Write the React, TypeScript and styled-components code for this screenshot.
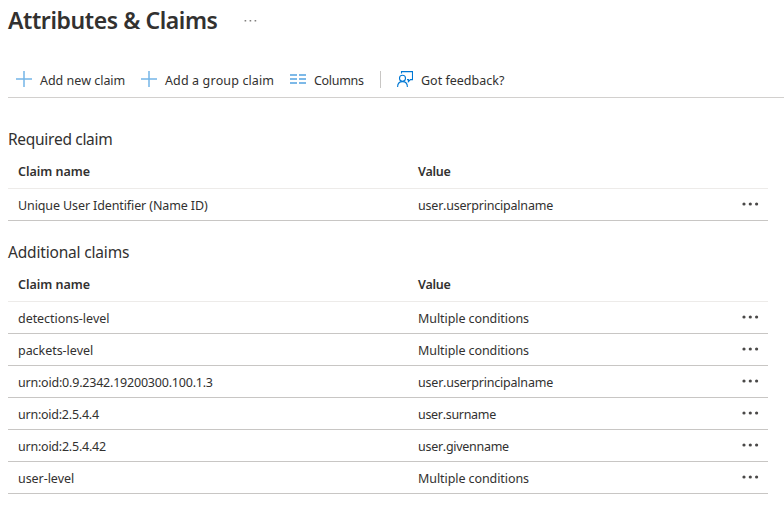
import React from "react";
import styled, { createGlobalStyle } from "styled-components";

const GlobalStyle = createGlobalStyle`
  *, *::before, *::after { box-sizing: border-box; }
  body {
    margin: 0;
    background: #fff;
    color: #323130;
    font: 12.5px/18px "Noto Sans", "Open Sans", sans-serif;
    font-kerning: none;
  }
`;

const Page = styled.main`
  height: 519px;
  padding-left: 8px;
  overflow: hidden;
`;

const TitleBar = styled.header`
  display: flex;
  align-items: center;
  height: 62px;
  padding-bottom: 21px;
`;

const Title = styled.h1`
  margin: 0;
  width: 236px;
  height: 32px;
  font-size: 23px;
  line-height: 31px;
  font-weight: 600;
  letter-spacing: -0.42px;
  white-space: nowrap;
`;

const Toolbar = styled.nav`
  display: flex;
  align-items: center;
  height: 36px;
  padding-left: 8px;
  border-bottom: 1px solid #d2d0ce;
`;

const Label = styled.span<{ $spacing?: number }>`
  display: block;
  padding-top: 2px;
  letter-spacing: ${(p) => p.$spacing ?? 0}px;
`;

const Command = styled.button<{ $width: number }>`
  display: flex;
  align-items: center;
  gap: 8px;
  width: ${(p) => p.$width}px;
  height: 34px;
  padding: 0;
  border: 0;
  background: none;
  color: inherit;
  font: inherit;
  font-kerning: none;
  white-space: nowrap;
  svg { flex: none; margin-top: -1px; }
`;

const Divider = styled.span`
  width: 1px;
  height: 17px;
  margin: -1px 16px 0 0;
  background: #c8c6c4;
`;

const Section = styled.section`
  width: 760px;
  padding-top: 30px;
  & + & { padding-top: 20px; }
`;

const SectionTitle = styled.h2<{ $spacing?: number }>`
  margin: 0;
  height: 23px;
  font-size: 15.5px;
  line-height: 22px;
  font-weight: 400;
  letter-spacing: ${(p) => p.$spacing ?? 0}px;
`;

const Row = styled.div<{ $header?: boolean }>`
  display: grid;
  grid-template-columns: 400px 324px 16px;
  align-items: center;
  height: ${(p) => (p.$header ? 38 : 32)}px;
  padding: ${(p) => (p.$header ? "3px 10px 0" : "1px 10px 0")};
  border-bottom: 1px solid ${(p) => (p.$header ? "#edebe9" : "#c8c6c4")};
  font-weight: ${(p) => (p.$header ? 580 : 400)};
`;

const MoreButton = styled.button`
  display: flex;
  width: 18px;
  height: 14px;
  margin-top: -3px;
  padding: 0;
  border: 0;
  background: none;
  align-items: center;
`;

const PlusIcon = () => (
  <svg width="16" height="16" viewBox="0 0 16 16" fill="none" stroke="#0078d4" strokeOpacity=".55">
    <path d="M8 0v16M0 8h16" strokeWidth="1.5" />
  </svg>
);

const ColumnsIcon = () => (
  <svg width="16" height="16" viewBox="0 0 16 16" fill="#7db9e8">
    <path d="M0 3h7v2H0zM9 3h7v2H9zM0 7h7v2H0zM9 7h7v2H9zM0 11h7v2H0zM9 11h7v2H9z" />
  </svg>
);

const FeedbackIcon = () => (
  <svg width="16" height="16" viewBox="0 0 16 16" fill="none" stroke="#0078d4" strokeWidth="1.1">
    <path d="M4.5 2.6V.6h11v8h-2.1L11.4 10.6V8.6H10" />
    <circle cx="5.5" cy="7.3" r="3" />
    <path d="M.6 16c0-3.3 2-5.4 4.9-5.4s4.9 2.1 4.9 5.4" />
  </svg>
);

const MoreIcon = () => (
  <svg width="18" height="4" viewBox="0 0 18 4" fill="#4a4948">
    <circle cx="2" cy="2" r="1.6" />
    <circle cx="8.3" cy="2" r="1.6" />
    <circle cx="14.6" cy="2" r="1.6" />
  </svg>
);

const TitleMoreIcon = () => (
  <svg width="13" height="2" viewBox="0 0 13 2" fill="#6b6967">
    <path d="M.6 0h1.6v1.5H.6zM5.6 0h1.6v1.5H5.6zM10.6 0h1.6v1.5h-1.6z" fillOpacity=".85" />
  </svg>
);

type Claim = { name: string; value: string; nameSpacing: number; valueSpacing: number };

const requiredClaims: Claim[] = [
  { name: "Unique User Identifier (Name ID)", value: "user.userprincipalname", nameSpacing: -0.11, valueSpacing: -0.21 },
];

const additionalClaims: Claim[] = [
  { name: "detections-level", value: "Multiple conditions", nameSpacing: -0.05, valueSpacing: -0.08 },
  { name: "packets-level", value: "Multiple conditions", nameSpacing: -0.05, valueSpacing: -0.08 },
  { name: "urn:oid:0.9.2342.19200300.100.1.3", value: "user.userprincipalname", nameSpacing: -0.21, valueSpacing: -0.21 },
  { name: "urn:oid:2.5.4.4", value: "user.surname", nameSpacing: -0.24, valueSpacing: -0.31 },
  { name: "urn:oid:2.5.4.42", value: "user.givenname", nameSpacing: -0.23, valueSpacing: -0.28 },
  { name: "user-level", value: "Multiple conditions", nameSpacing: -0.06, valueSpacing: -0.08 },
];

const ClaimTable = ({ claims }: { claims: Claim[] }) => (
  <>
    <Row $header>
      <Label $spacing={-0.03}>Claim name</Label>
      <Label $spacing={-0.3}>Value</Label>
    </Row>
    {claims.map((c) => (
      <Row key={c.name}>
        <Label $spacing={c.nameSpacing}>{c.name}</Label>
        <Label $spacing={c.valueSpacing}>{c.value}</Label>
        <MoreButton aria-label="More"><MoreIcon /></MoreButton>
      </Row>
    ))}
  </>
);

export default function App() {
  return (
    <Page>
      <GlobalStyle />
      <TitleBar>
        <Title>Attributes &amp; Claims</Title>
        <TitleMoreIcon />
      </TitleBar>
      <Toolbar>
        <Command $width={125}><PlusIcon /><Label $spacing={-0.03}>Add new claim</Label></Command>
        <Command $width={149}><PlusIcon /><Label $spacing={0.12}>Add a group claim</Label></Command>
        <Command $width={90}><ColumnsIcon /><Label $spacing={-0.3}>Columns</Label></Command>
        <Divider />
        <Command $width={120}><FeedbackIcon /><Label $spacing={0}>Got feedback?</Label></Command>
      </Toolbar>
      <Section>
        <SectionTitle $spacing={-0.32}>Required claim</SectionTitle>
        <ClaimTable claims={requiredClaims} />
      </Section>
      <Section>
        <SectionTitle $spacing={-0.18}>Additional claims</SectionTitle>
        <ClaimTable claims={additionalClaims} />
      </Section>
    </Page>
  );
}
